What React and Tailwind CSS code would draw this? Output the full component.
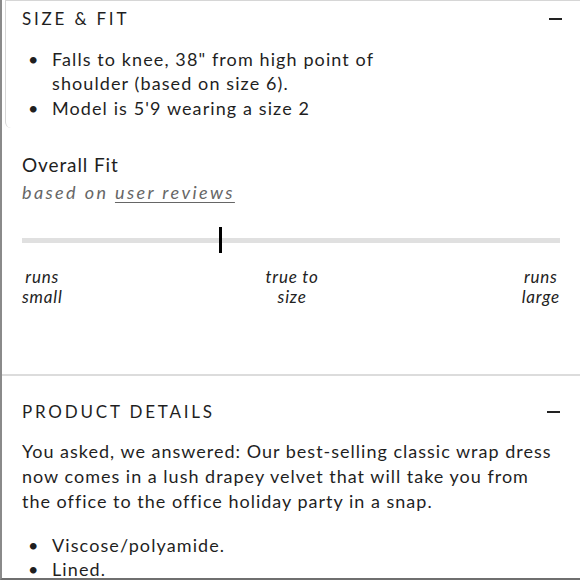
export default function App() {
  const font = { fontFamily: 'Lato, "Open Sans", sans-serif' };
  return (
    <div
      className="w-[580px] h-[580px] overflow-hidden bg-white border-l-2 border-b-2 border-l-[#8a8a8a] border-b-[#6f6f6f] text-[#1f1f1f]"
      style={font}
    >
      {/* Size & Fit */}
      <div className="ml-[3px] border-l border-t border-[#d6d6d6] rounded-bl-[6px] h-[128px]">
        <div className="flex items-center justify-between pl-[16px] pr-[18px] pt-[5px]">
          <h2 className="text-[17px] tracking-[2.8px] uppercase">Size &amp; Fit</h2>
          <span className="block w-[13px] h-[2px] bg-[#222]" />
        </div>
        <ul className="mt-[15px] pl-[16px] text-[18px] leading-[24.5px] tracking-[1.1px]">
          <li className="flex">
            <span className="w-[30px] shrink-0 pl-[6px]">•</span>
            <span>
              Falls to knee, 38" from high point of
              <br />
              shoulder (based on size 6).
            </span>
          </li>
          <li className="flex">
            <span className="w-[30px] shrink-0 pl-[6px]">•</span>
            <span>Model is 5'9 wearing a size 2</span>
          </li>
        </ul>
      </div>

      {/* Overall fit */}
      <div className="px-[20px] pt-[24px]">
        <div className="text-[19px] leading-[26px] tracking-[0.9px]">Overall Fit</div>
        <div className="text-[18px] italic text-[#666] tracking-[2.4px] leading-[28px]">
          based on <span className="underline underline-offset-[3px]">user reviews</span>
        </div>
        <div className="relative mt-[32px] h-[5px] bg-[#e0e0e0]">
          <span className="absolute left-[197px] -top-[11px] w-[3px] h-[26px] bg-black" />
        </div>
        <div className="mt-[24px] flex justify-between text-[17px] italic leading-[20px] tracking-[0.8px] text-[#222]">
          <div className="text-center">runs<br />small</div>
          <div className="text-center">true to<br />size</div>
          <div className="text-center">runs<br />large</div>
        </div>
      </div>

      <div className="mt-[67px] h-[2px] bg-[#dcdcdc]" />

      {/* Product details */}
      <div className="px-[20px] pt-[23px]">
        <div className="flex items-center justify-between">
          <h2 className="text-[17px] tracking-[2.8px] uppercase">Product Details</h2>
          <span className="block w-[13px] h-[2px] bg-[#222]" />
        </div>
        <p className="mt-[14px] text-[18px] leading-[25px] tracking-[1px]">
          You asked, we answered: Our best-selling classic wrap dress now comes in a lush drapey velvet that will take you from the office to the office holiday party in a snap.
        </p>
        <ul className="mt-[19px] text-[18px] leading-[24px] tracking-[1.1px]">
          <li className="flex">
            <span className="w-[30px] shrink-0 pl-[6px]">•</span>
            <span>Viscose/polyamide.</span>
          </li>
          <li className="flex">
            <span className="w-[30px] shrink-0 pl-[6px]">•</span>
            <span>Lined.</span>
          </li>
        </ul>
      </div>
    </div>
  );
}
